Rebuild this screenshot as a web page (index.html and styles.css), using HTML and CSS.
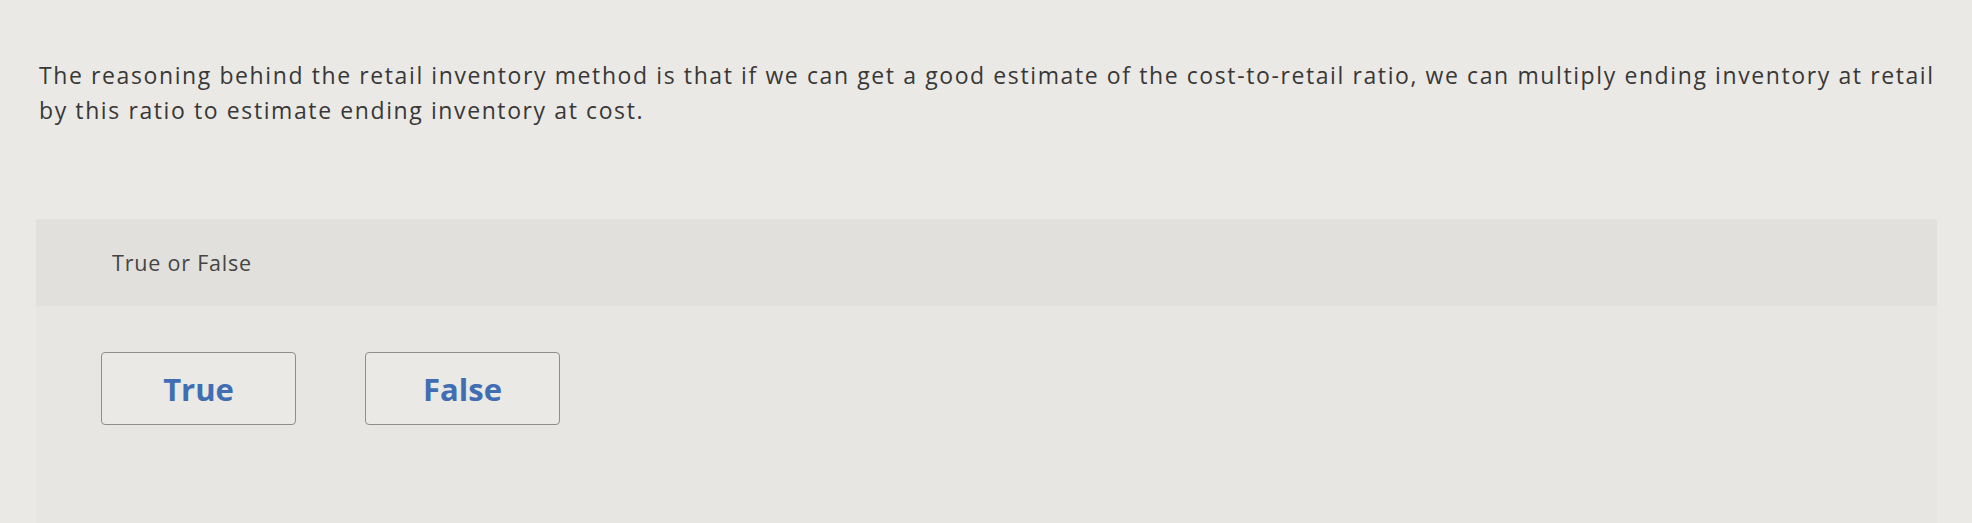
FILE: index.html
```html
<!DOCTYPE html>
<html lang="en">
<head>
<meta charset="utf-8">
<title>True or False</title>
<link rel="stylesheet" href="styles.css">
</head>
<body>
<main class="page">
  <p class="question">The reasoning behind the retail inventory method is that if we can get a good estimate of the cost-to-retail ratio, we can multiply ending inventory at retail by this ratio to estimate ending inventory at cost.</p>
  <section class="panel">
    <header class="panel-head">True or False</header>
    <div class="panel-body">
      <button class="choice" type="button">True</button>
      <button class="choice" type="button">False</button>
    </div>
  </section>
</main>
</body>
</html>
```

FILE: styles.css
```css
html, body {
  margin: 0;
  padding: 0;
  height: 100%;
}
body {
  background: #ebe9e5;
  font-family: "Open Sans", Lato, "Liberation Sans", sans-serif;
  color: #3e3e3e;
  overflow: hidden;
}
.page {
  padding: 0 35px 0 36px;
  height: 100%;
  display: flex;
  flex-direction: column;
}
.question {
  margin: 58px -15px 0 3px;
  font-size: 23px;
  line-height: 35px;
  letter-spacing: 1.6px;
  color: #383838;
}
.panel {
  margin-top: 91px;
  flex: 1;
  background: #e7e6e2;
  border-radius: 3px 3px 0 0;
  display: flex;
  flex-direction: column;
}
.panel-head {
  height: 87px;
  background: #e1e0dc;
  border-radius: 3px 3px 0 0;
  padding-left: 76px;
  display: flex;
  align-items: center;
  font-size: 21.5px;
  letter-spacing: 0.8px;
  color: #454545;
}
.panel-body {
  padding: 46px 0 0 65px;
  display: flex;
  gap: 69px;
  align-items: flex-start;
}
.choice {
  width: 195px;
  height: 73px;
  box-sizing: border-box;
  background: #eae9e5;
  border: 1.5px solid #8e8e8e;
  border-radius: 4px;
  font-family: "Open Sans", Lato, sans-serif;
  font-weight: 700;
  font-size: 31px;
  color: #416eb3;
  padding: 0;
}
```
